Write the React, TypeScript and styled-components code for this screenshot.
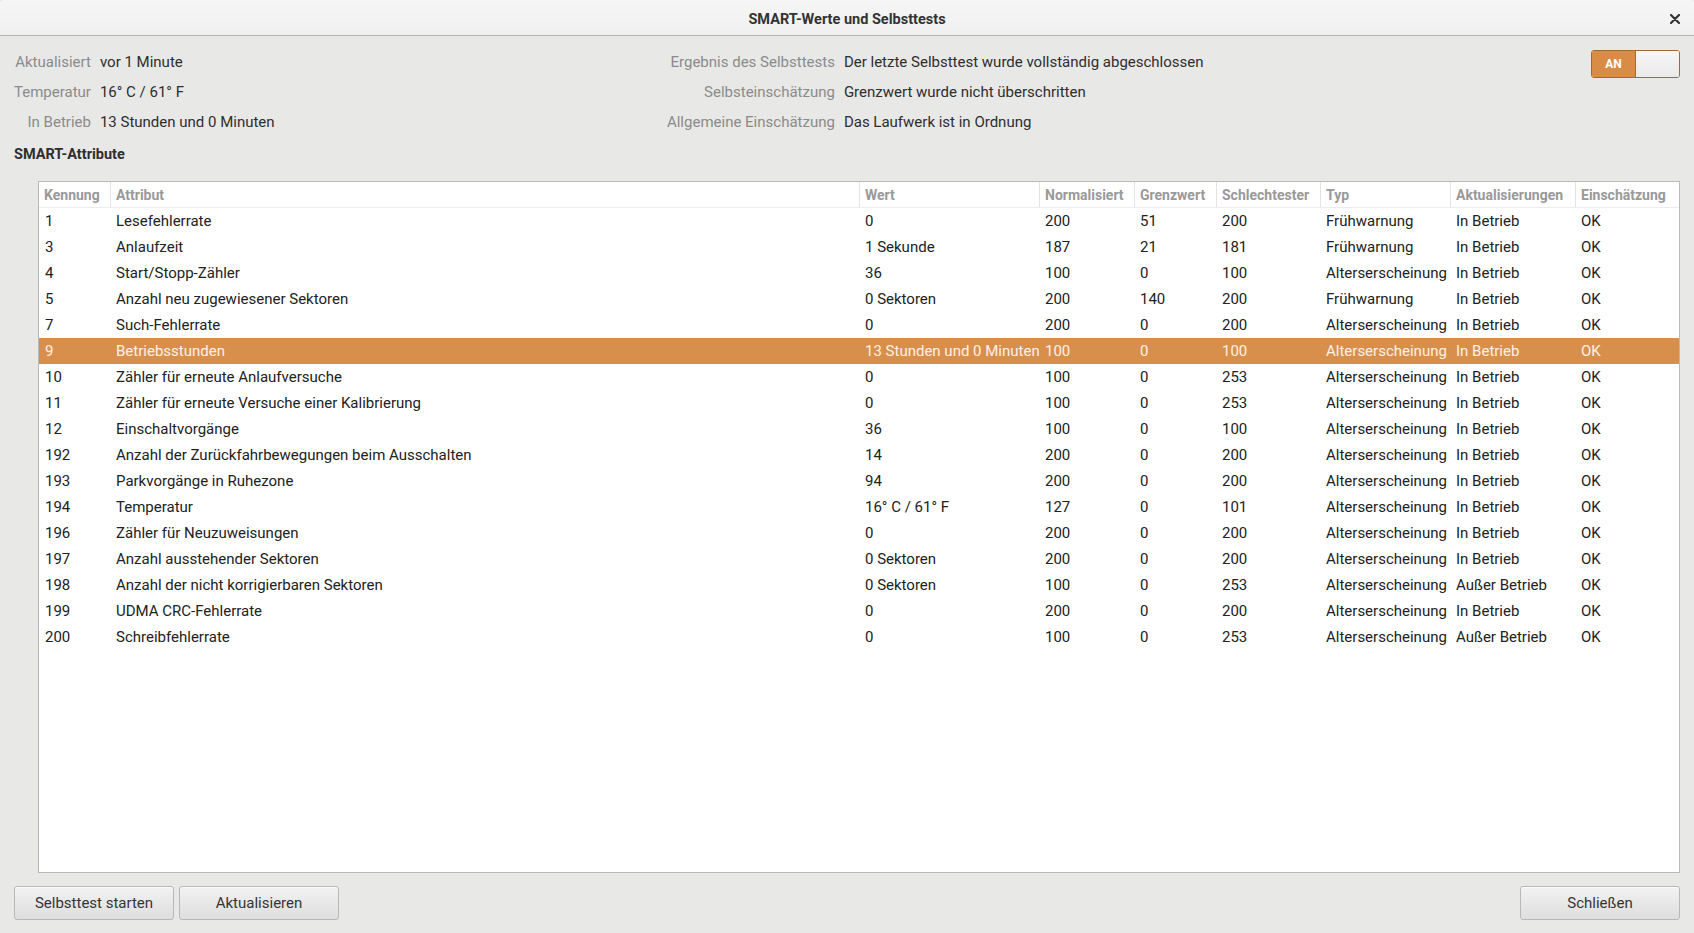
import React from 'react';
import styled, { createGlobalStyle } from 'styled-components';

const GlobalStyle = createGlobalStyle`
  html, body {
    margin: 0;
    padding: 0;
    background: #e8e8e7;
    font-family: Roboto, "Noto Sans", "DejaVu Sans", sans-serif;
  }
  * { box-sizing: border-box; }
`;

const Window = styled.div`
  width: 1694px;
  height: 933px;
  display: flex;
  flex-direction: column;
  background: #e8e8e7;
  overflow: hidden;
`;

const TitleBar = styled.header`
  height: 36px;
  flex: none;
  position: relative;
  display: flex;
  align-items: center;
  justify-content: center;
  padding-top: 3px;
  background: linear-gradient(#f6f6f6, #f0f0f0);
  border-bottom: 1px solid #b4b4b4;
  border-radius: 4px 4px 0 0;
`;

const Title = styled.h1`
  margin: 0;
  font-size: 14.5px;
  font-weight: 700;
  color: #333;
`;

const CloseButton = styled.button`
  position: absolute;
  right: 10px;
  top: 10px;
  width: 18px;
  height: 18px;
  padding: 0;
  border: none;
  background: none;
  display: flex;
  align-items: center;
  justify-content: center;
  color: #333;
`;

const Body = styled.main`
  flex: 1;
  display: flex;
  flex-direction: column;
  padding: 11px 14px 13px 14px;
  min-height: 0;
`;

const InfoGrid = styled.div`
  display: grid;
  grid-template-columns: auto 558px auto 1fr auto;
  grid-auto-rows: 30px;
  column-gap: 9px;
  align-items: center;
  font-size: 15px;
`;

const Label = styled.span`
  color: #8b8b8b;
  text-align: right;
  white-space: nowrap;
`;

const Value = styled.span`
  color: #2e2e2e;
  white-space: nowrap;
`;

const Toggle = styled.div`
  grid-column: 5;
  grid-row: 1 / span 3;
  align-self: start;
  margin-top: 3px;
  width: 89px;
  height: 28px;
  display: flex;
  border: 1px solid #a26a33;
  border-radius: 3px;
  overflow: hidden;
`;

const ToggleOn = styled.span`
  width: 44px;
  display: flex;
  align-items: center;
  justify-content: center;
  background: #d98c45;
  color: #fff;
  font-size: 12px;
  font-weight: 700;
  border-right: 1px solid #a26a33;
`;

const ToggleKnob = styled.span`
  flex: 1;
  background: linear-gradient(#f6f6f6, #eaeaea);
`;

const SectionTitle = styled.h2`
  margin: 5px 0 0 0;
  height: 26px;
  line-height: 26px;
  font-size: 14.5px;
  font-weight: 700;
  color: #2e2e2e;
`;

const TableFrame = styled.div`
  flex: 1;
  margin: 13px 0 0 24px;
  background: #fff;
  border: 1px solid #b9b9b9;
  min-height: 0;
  overflow: hidden;
`;

const COLUMNS = '71px 749px 180px 95px 82px 104px 130px 125px 1fr';

const HeaderRow = styled.div`
  display: grid;
  grid-template-columns: ${COLUMNS};
  height: 26px;
  border-bottom: 1px solid #ececec;
`;

const HeaderCell = styled.div<{ $first?: boolean }>`
  display: flex;
  align-items: center;
  padding-left: ${p => (p.$first ? '5px' : '5px')};
  border-left: ${p => (p.$first ? 'none' : '1px solid #e3e3e3')};
  color: #999;
  font-size: 14px;
  font-weight: 700;
  white-space: nowrap;
  overflow: hidden;
`;

const Row = styled.div<{ $selected?: boolean }>`
  display: grid;
  grid-template-columns: ${COLUMNS};
  height: 26px;
  align-items: center;
  background: ${p => (p.$selected ? '#d98f4c' : 'transparent')};
  color: ${p => (p.$selected ? '#fdf1e6' : '#222')};
  font-size: 15px;
`;

const Cell = styled.div`
  padding-left: 6px;
  white-space: nowrap;
  overflow: hidden;
`;

const ButtonBar = styled.footer`
  flex: none;
  display: flex;
  gap: 5px;
  margin-top: 13px;
`;

const Button = styled.button<{ $push?: boolean }>`
  width: 160px;
  height: 34px;
  margin-left: ${p => (p.$push ? 'auto' : '0')};
  border: 1px solid #b8b8b8;
  border-radius: 3px;
  background: linear-gradient(#f2f2f2, #dedede);
  box-shadow: inset 0 1px 0 #fbfbfb;
  font-family: inherit;
  font-size: 15px;
  color: #353535;
`;

const headers = [
  'Kennung',
  'Attribut',
  'Wert',
  'Normalisiert',
  'Grenzwert',
  'Schlechtester',
  'Typ',
  'Aktualisierungen',
  'Einschätzung',
];

type Attr = [string, string, string, string, string, string, string, string, string];

const rows: Attr[] = [
  ['1', 'Lesefehlerrate', '0', '200', '51', '200', 'Frühwarnung', 'In Betrieb', 'OK'],
  ['3', 'Anlaufzeit', '1 Sekunde', '187', '21', '181', 'Frühwarnung', 'In Betrieb', 'OK'],
  ['4', 'Start/Stopp-Zähler', '36', '100', '0', '100', 'Alterserscheinung', 'In Betrieb', 'OK'],
  ['5', 'Anzahl neu zugewiesener Sektoren', '0 Sektoren', '200', '140', '200', 'Frühwarnung', 'In Betrieb', 'OK'],
  ['7', 'Such-Fehlerrate', '0', '200', '0', '200', 'Alterserscheinung', 'In Betrieb', 'OK'],
  ['9', 'Betriebsstunden', '13 Stunden und 0 Minuten', '100', '0', '100', 'Alterserscheinung', 'In Betrieb', 'OK'],
  ['10', 'Zähler für erneute Anlaufversuche', '0', '100', '0', '253', 'Alterserscheinung', 'In Betrieb', 'OK'],
  ['11', 'Zähler für erneute Versuche einer Kalibrierung', '0', '100', '0', '253', 'Alterserscheinung', 'In Betrieb', 'OK'],
  ['12', 'Einschaltvorgänge', '36', '100', '0', '100', 'Alterserscheinung', 'In Betrieb', 'OK'],
  ['192', 'Anzahl der Zurückfahrbewegungen beim Ausschalten', '14', '200', '0', '200', 'Alterserscheinung', 'In Betrieb', 'OK'],
  ['193', 'Parkvorgänge in Ruhezone', '94', '200', '0', '200', 'Alterserscheinung', 'In Betrieb', 'OK'],
  ['194', 'Temperatur', '16° C / 61° F', '127', '0', '101', 'Alterserscheinung', 'In Betrieb', 'OK'],
  ['196', 'Zähler für Neuzuweisungen', '0', '200', '0', '200', 'Alterserscheinung', 'In Betrieb', 'OK'],
  ['197', 'Anzahl ausstehender Sektoren', '0 Sektoren', '200', '0', '200', 'Alterserscheinung', 'In Betrieb', 'OK'],
  ['198', 'Anzahl der nicht korrigierbaren Sektoren', '0 Sektoren', '100', '0', '253', 'Alterserscheinung', 'Außer Betrieb', 'OK'],
  ['199', 'UDMA CRC-Fehlerrate', '0', '200', '0', '200', 'Alterserscheinung', 'In Betrieb', 'OK'],
  ['200', 'Schreibfehlerrate', '0', '100', '0', '253', 'Alterserscheinung', 'Außer Betrieb', 'OK'],
];

const App: React.FC = () => {
  return (
    <Window>
      <GlobalStyle />
      <TitleBar>
        <Title>SMART-Werte und Selbsttests</Title>
        <CloseButton aria-label="Schließen">
          <svg width="10" height="10" viewBox="0 0 10 10">
            <path d="M1 1 L9 9 M9 1 L1 9" stroke="#333" strokeWidth="2.2" strokeLinecap="round" />
          </svg>
        </CloseButton>
      </TitleBar>

      <Body>
        <InfoGrid>
          <Label>Aktualisiert</Label>
          <Value>vor 1 Minute</Value>
          <Label>Ergebnis des Selbsttests</Label>
          <Value>Der letzte Selbsttest wurde vollständig abgeschlossen</Value>
          <Toggle>
            <ToggleOn>AN</ToggleOn>
            <ToggleKnob />
          </Toggle>

          <Label>Temperatur</Label>
          <Value>16° C / 61° F</Value>
          <Label>Selbsteinschätzung</Label>
          <Value>Grenzwert wurde nicht überschritten</Value>

          <Label>In Betrieb</Label>
          <Value>13 Stunden und 0 Minuten</Value>
          <Label>Allgemeine Einschätzung</Label>
          <Value>Das Laufwerk ist in Ordnung</Value>
        </InfoGrid>

        <SectionTitle>SMART-Attribute</SectionTitle>

        <TableFrame>
          <HeaderRow>
            {headers.map((h, i) => (
              <HeaderCell key={h} $first={i === 0}>{h}</HeaderCell>
            ))}
          </HeaderRow>
          {rows.map(r => (
            <Row key={r[0]} $selected={r[0] === '9'}>
              {r.map((c, i) => (
                <Cell key={i}>{c}</Cell>
              ))}
            </Row>
          ))}
        </TableFrame>

        <ButtonBar>
          <Button>Selbsttest starten</Button>
          <Button>Aktualisieren</Button>
          <Button $push>Schließen</Button>
        </ButtonBar>
      </Body>
    </Window>
  );
};

export default App;
